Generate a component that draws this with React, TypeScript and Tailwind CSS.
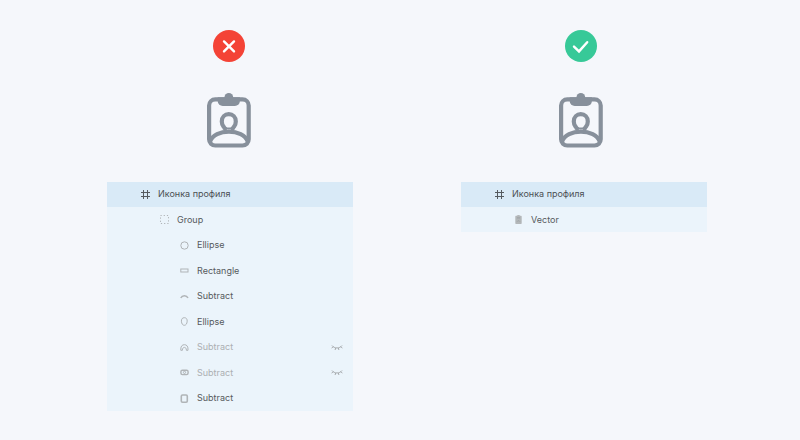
import React from 'react';
import { clsx } from 'clsx';

type IconName =
  | 'frame'
  | 'group'
  | 'circle'
  | 'rectangle'
  | 'arc'
  | 'head'
  | 'shoulders'
  | 'clip'
  | 'board'
  | 'vector';

type Layer = { name: string; icon: IconName; level: 1 | 2; hidden?: boolean };

const messyLayers: Layer[] = [
  { name: 'Group', icon: 'group', level: 1 },
  { name: 'Ellipse', icon: 'circle', level: 2 },
  { name: 'Rectangle', icon: 'rectangle', level: 2 },
  { name: 'Subtract', icon: 'arc', level: 2 },
  { name: 'Ellipse', icon: 'head', level: 2 },
  { name: 'Subtract', icon: 'shoulders', level: 2, hidden: true },
  { name: 'Subtract', icon: 'clip', level: 2, hidden: true },
  { name: 'Subtract', icon: 'board', level: 2 },
];

const cleanLayers: Layer[] = [{ name: 'Vector', icon: 'vector', level: 1 }];

const shapes: Record<IconName, React.ReactNode> = {
  frame: <path d="M3.5 1v9M7.5 1v9M1 3.5h9M1 7.5h9" stroke="#555b60" />,
  group: <rect x="1.5" y="1.5" width="8" height="8" strokeDasharray="1.2 2" />,
  circle: <circle cx="5.5" cy="5.5" r="3.7" />,
  rectangle: <rect x="1.8" y="4" width="7.2" height="3" />,
  arc: <path d="M1.8 7C3.2 3.9 7.6 3.9 9 7" strokeWidth="1.5" />,
  head: <path d="M5.3 1.7C3.4 1.7 2.3 3 2.4 5.2C2.6 7.8 3.7 9.3 5.3 9.3S8 7.8 8.2 5.2C8.3 3 7.2 1.7 5.3 1.7Z" />,
  shoulders: (
    <path d="M1.8 8.3V7C1.8 4.2 3.2 2.7 5.4 2.7S9 4.2 9 7v1.3H7.4C7.4 6.4 6.6 5.4 5.4 5.4S3.4 6.4 3.4 8.3Z" />
  ),
  clip: (
    <>
      <rect x="1.9" y="3.2" width="7.2" height="4.4" rx="1.5" strokeWidth="1.4" />
      <circle cx="5.5" cy="5.4" r="1.1" />
    </>
  ),
  board: <rect x="2.3" y="2" width="6" height="7.2" rx="1.2" strokeWidth="1.6" />,
  vector: (
    <>
      <path d="M3 2.5h1.2a1.4 1.2 0 0 1 2.6 0H8v6.7H3Z" fill="#b3b7b9" stroke="#b3b7b9" strokeWidth="1.4" strokeLinejoin="round" />
      <path d="M4 3.9h3M4.2 7.5c.5-1 2.1-1 2.6 0" stroke="#969b9e" strokeWidth="0.8" />
    </>
  ),
};

const LayerIcon = ({ name }: { name: IconName }) => (
  <svg className="size-[11px] shrink-0" viewBox="0 0 11 11" fill="none" stroke="#b0b4b7" strokeWidth="1" aria-hidden="true">
    {shapes[name]}
  </svg>
);

const ClosedEye = () => (
  <svg className="ml-auto h-[7px] w-3" viewBox="0 0 12 7" fill="none" stroke="#a6aaad" strokeWidth="1" aria-hidden="true">
    <path d="M1 1.5C3.5 4.8 8.5 4.8 11 1.5M2.2 2.8L.6 4M4.6 4L4.1 6M7.4 4L7.9 6M9.8 2.8L11.4 4" />
  </svg>
);

const ProfileIcon = () => (
  <svg className="mt-[31px] h-[55px] w-11" viewBox="0 0 44 55" fill="none" stroke="#87909b" strokeWidth="4.2" aria-hidden="true">
    <rect x="2.1" y="6.3" width="39.6" height="46.2" rx="6.2" />
    <g fill="#87909b" stroke="none">
      <circle cx="21.8" cy="4.4" r="4.4" />
      <path d="M10.7 4.3h22.2v3.6a5 5 0 0 1-5 5H15.7a5 5 0 0 1-5-5Z" />
    </g>
    <path d="M17.6 37.5C18.4 36.2 17.6 35 16.6 33.6C15.5 32.2 14.8 30.6 14.8 28.4C14.8 24.2 17.8 21.2 21.8 21.2S28.8 24.2 28.8 28.4C28.8 30.6 28.1 32.2 27 33.6C26 35 25.2 36.2 26 37.5" />
    <path d="M18 34.2Q21.8 37 25.6 34.2" strokeWidth="2" />
    <path d="M3 48.6C7.4 35.2 36.4 35.2 40.8 48.6" />
  </svg>
);

const Verdict = ({ good }: { good?: boolean }) => (
  <div className="flex flex-col items-center">
    <svg className="size-8" viewBox="0 0 32 32" fill="none" stroke="white" strokeWidth="2.4" strokeLinecap="round" aria-hidden="true">
      <circle cx="16" cy="16" r="16" fill={good ? '#37c998' : '#f44336'} stroke="none" />
      <path d={good ? 'M9 16.6l5 4.8L22.2 12.2' : 'M11 11.4l10 10M21 11.4l-10 10'} />
    </svg>
    <ProfileIcon />
  </div>
);

const LayerPanel = ({ layers }: { layers: Layer[] }) => (
  <section className="bg-[#ebf4fb]">
    <h2 className="flex h-[25px] items-center gap-[7px] bg-[#d9eaf7] pb-px pl-[33px] text-[#4c5053]">
      <LayerIcon name="frame" />
      Иконка профиля
    </h2>
    <ul>
      {layers.map((layer, i) => (
        <li
          key={i}
          className={clsx(
            'flex items-center gap-[7px] pr-[10px]',
            // every other row is a pixel taller
            i % 2 ? 'h-[26px]' : 'h-[25px]',
            layer.level === 1 ? 'pl-[52px]' : 'pl-[72px]',
            layer.hidden ? 'text-[#abafb2]' : 'text-[#565a5d]'
          )}
        >
          <LayerIcon name={layer.icon} />
          {layer.name}
          {layer.hidden && <ClosedEye />}
        </li>
      ))}
    </ul>
  </section>
);

const App = () => (
  <main className="min-h-screen bg-[#f5f7fb] pt-[30px] font-['Inter',sans-serif] text-[9px] leading-3">
    <div className="grid grid-cols-2 pr-[43px] pl-[53px]">
      <Verdict />
      <Verdict good />
    </div>
    <div className="mt-[34px] grid grid-cols-2 items-start gap-[108px] pr-[93px] pl-[107px]">
      <LayerPanel layers={messyLayers} />
      <LayerPanel layers={cleanLayers} />
    </div>
  </main>
);

export default App;
